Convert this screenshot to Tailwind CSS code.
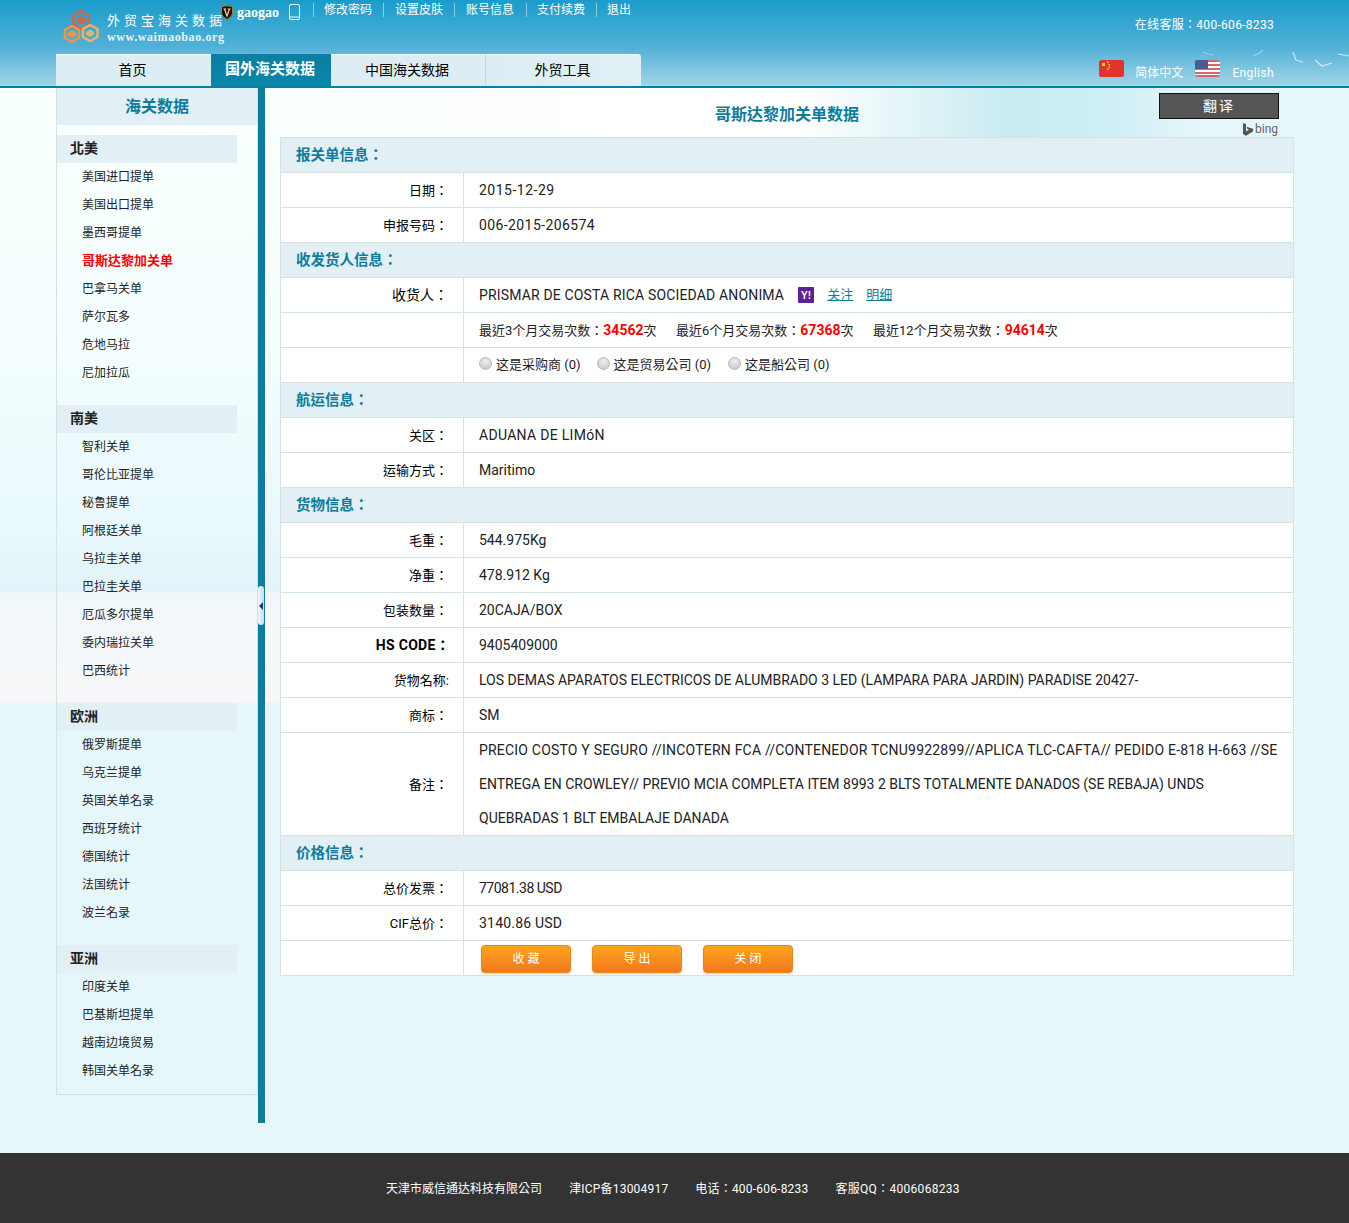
<!DOCTYPE html>
<html>
<head>
    <meta charset="UTF-8">
    <title>哥斯达黎加关单数据</title>
    <meta name="viewport" content="width=device-width, initial-scale=1.0">
    <script src="https://cdn.jsdelivr.net/npm/@tailwindcss/browser@4"></script>
</head>
<body class="bg-[#e6f7fc] font-['Roboto','Noto_Sans_CJK_TC',sans-serif] text-[14px] text-[#222]">

    <!-- header -->
    <header class="h-[88px] border-b-2 border-[#0b7f9f] bg-[linear-gradient(180deg,#1a9ccb_0%,#52b1d6_55%,#a3d5e8_100%)] relative">
        <svg class="absolute right-0 top-[48px]" width="149" height="22" viewBox="0 0 149 22" fill="none" stroke="#cfeaf4" stroke-width="1.200">
            <path d="M3 4l5 2 5 1" opacity=".5"/><path d="M53 8l5-2 5-4" opacity=".6"/><path d="M93 4l3 8 7 2"/><path d="M115 12l7 6 10-3"/><path d="M138 6l11 2"/>
        </svg>

        <!-- top row -->
        <div class="h-[54px] flex items-start pl-[56px] pr-[75px] text-white">
            <svg class="mt-[9px] ml-[7px]" width="37" height="36" viewBox="0 0 37 36" fill="none">
                <path d="M18 2l7.500 4.500v9L18 20l-7.500-4.500v-9z" stroke="#e2603a" stroke-width="2.500"/>
                <path d="M18 7l4 2.500v3.500L18 15.500 14 13V9.500z" fill="#e2603a"/>
                <path d="M9 17l7 4v8l-7 4-7-4v-8z" stroke="#e8964a" stroke-width="2.500"/>
                <path d="M9 21l4 2.500v3L9 29l-4-2.500v-3z" fill="#e8964a"/>
                <path d="M27 16l7.500 4v8L27 32l-7-4v-8z" stroke="#eab074" stroke-width="2.500"/>
                <path d="M27 20.500l4 2.500v2.500L27 28l-4-2.500V23z" fill="#eab074"/>
            </svg>
            <div class="ml-[7px] mt-[12px] w-[117px] shrink-0">
                <div class="text-[13px] leading-[18px] tracking-[4px] whitespace-nowrap">外贸宝海关数据</div>
                <div class="font-['Liberation_Serif',serif] font-bold text-[12px] leading-[15px] tracking-[0.6px] whitespace-nowrap text-[#e8f4fa]">www.waimaobao.org</div>
            </div>
            <svg class="mt-[5px] -ml-[4px] relative" width="14" height="16" viewBox="0 0 14 16">
                <path d="M1.500 1.500q5.500-1.500 11 0v7q0 3-5.500 6-5.500-3-5.500-6z" fill="#1c1208" stroke="#a87c34" stroke-width="1"/>
                <path d="M3.500 4h2.800M7.800 4h2.700M4.500 4L7 11l2.500-7" fill="none" stroke="#f0d8a0" stroke-width="1.200"/>
            </svg>
            <span class="ml-[3px] mt-[4px] font-['Liberation_Serif',serif] font-bold text-[14px] leading-[18px]">gaogao</span>
            <svg class="ml-[10px] mt-[4px]" width="11" height="16" viewBox="0 0 11 16" fill="none">
                <rect x="0.500" y="0.500" width="10" height="15" rx="1.500" stroke="#eef8fc"/>
                <path d="M1 13h9" stroke="#eef8fc"/>
            </svg>
            <nav class="flex text-[12px] mt-[3px] ml-[13px]">
                <a href="#" class="border-l border-[#8ecbe3] pl-[10px] pr-[11px] h-[14px] leading-[14px]">修改密码</a>
                <a href="#" class="border-l border-[#8ecbe3] pl-[11px] pr-[11px] h-[14px] leading-[14px]">设置皮肤</a>
                <a href="#" class="border-l border-[#8ecbe3] pl-[11px] pr-[12px] h-[14px] leading-[14px]">账号信息</a>
                <a href="#" class="border-l border-[#8ecbe3] pl-[10px] pr-[11px] h-[14px] leading-[14px]">支付续费</a>
                <a href="#" class="border-l border-[#8ecbe3] pl-[10px] h-[14px] leading-[14px]">退出</a>
            </nav>
            <div class="ml-auto mt-[16px] text-[12px] leading-[18px] tracking-[0.3px]">在线客服：400-606-8233</div>
        </div>

        <!-- tabs -->
        <div class="h-[32px] flex pl-[56px] pr-[75px]">
            <a href="#" class="w-[155px] pr-[2px] leading-[30px] text-center text-black bg-[#dcedf4] border-t border-[#eef7fa]">首页</a>
            <a href="#" class="w-[120px] pr-[2px] leading-[31px] text-center text-white font-bold text-[15px] bg-[linear-gradient(180deg,#0a7fa2,#0b86a8)]">国外海关数据</a>
            <a href="#" class="w-[155px] pr-[2px] leading-[30px] text-center text-black bg-[#dcedf4] border-t border-r border-t-[#eef7fa] border-r-[#bcd9e4]">中国海关数据</a>
            <a href="#" class="w-[155px] pr-[2px] leading-[30px] text-center text-black bg-[linear-gradient(90deg,#dcedf4,#e1f0f5)] border-t border-[#eef7fa] rounded-tr-[3px]">外贸工具</a>

            <div class="ml-auto flex items-start text-white text-[12px]">
                <svg class="mt-[6px] rounded-[2px]" width="25" height="17" viewBox="0 0 25 17">
                    <rect width="25" height="17" fill="#e1352a"/>
                    <path d="M3 3h3v3H3zM8 1.500h1.500V3H8zM9.500 4H11v1.500H9.500zM9.500 6.500H11V8H9.500zM8 8.500h1.500V10H8z" fill="#f7d234"/>
                </svg>
                <span class="ml-[11px] mt-[10px] leading-[18px]">简体中文</span>
                <svg class="ml-[12px] mt-[6px] rounded-[2px]" width="25" height="17" viewBox="0 0 25 17">
                    <rect width="25" height="17" fill="#fff"/>
                    <path d="M0 1h25M0 5h25M0 9h25M0 13h25M0 16h25" stroke="#c9343f" stroke-width="1.500"/>
                    <rect width="13" height="9" fill="#4a5b8c"/>
                </svg>
                <span class="ml-[12px] mt-[10px] tracking-[0.4px] leading-[18px]">English</span>
            </div>
        </div>
    </header>

    <!-- page body -->
    <div class="flex items-start pl-[56px] pb-[30px] bg-no-repeat bg-[linear-gradient(90deg,#f8ffff_0,#ffffff_700px,#ffffff_800px,#c8ebf1_1010px,#cdeef4_1110px,#e6f7fc_1200px),linear-gradient(180deg,#f8ffff_0,#f6ffff_230px,#e8f8fc_440px,#e2f4f9_503px,#f0f7fa_505px,#f7f8fa_600px,#f8f6f8_614px,#e6f7fc_615px)] bg-[size:100%_49px,1000px_615px]">

        <!-- sidebar -->
        <aside class="w-[202px] h-[1007px] shrink-0 border-x border-b border-[#d3e5db]">
            <h2 class="h-[37px] leading-[38px] bg-[#e2eff4] text-center text-[16px] font-bold text-[#0f7c9c]">海关数据</h2>

            <div class="mt-[10px]">
                <h3 class="w-[180px] h-[28px] leading-[27px] pl-[13px] bg-[#e2eff4] font-bold">北美</h3>
                <ul class="pl-[25px] text-[12px] leading-[28px]">
                    <li><a href="#">美国进口提单</a></li>
                    <li><a href="#">美国出口提单</a></li>
                    <li><a href="#">墨西哥提单</a></li>
                    <li><a href="#" class="text-[13px] text-[#ff0000] font-bold">哥斯达黎加关单</a></li>
                    <li><a href="#">巴拿马关单</a></li>
                    <li><a href="#">萨尔瓦多</a></li>
                    <li><a href="#">危地马拉</a></li>
                    <li><a href="#">尼加拉瓜</a></li>
                </ul>
            </div>

            <div class="mt-[18px]">
                <h3 class="w-[180px] h-[28px] leading-[27px] pl-[13px] bg-[#e2eff4] font-bold">南美</h3>
                <ul class="pl-[25px] text-[12px] leading-[28px]">
                    <li><a href="#">智利关单</a></li>
                    <li><a href="#">哥伦比亚提单</a></li>
                    <li><a href="#">秘鲁提单</a></li>
                    <li><a href="#">阿根廷关单</a></li>
                    <li><a href="#">乌拉圭关单</a></li>
                    <li><a href="#">巴拉圭关单</a></li>
                    <li><a href="#">厄瓜多尔提单</a></li>
                    <li><a href="#">委内瑞拉关单</a></li>
                    <li><a href="#">巴西统计</a></li>
                </ul>
            </div>

            <div class="mt-[18px]">
                <h3 class="w-[180px] h-[28px] leading-[27px] pl-[13px] bg-[#e2eff4] font-bold">欧洲</h3>
                <ul class="pl-[25px] text-[12px] leading-[28px]">
                    <li><a href="#">俄罗斯提单</a></li>
                    <li><a href="#">乌克兰提单</a></li>
                    <li><a href="#">英国关单名录</a></li>
                    <li><a href="#">西班牙统计</a></li>
                    <li><a href="#">德国统计</a></li>
                    <li><a href="#">法国统计</a></li>
                    <li><a href="#">波兰名录</a></li>
                </ul>
            </div>

            <div class="mt-[18px]">
                <h3 class="w-[180px] h-[28px] leading-[27px] pl-[13px] bg-[#e2eff4] font-bold">亚洲</h3>
                <ul class="pl-[25px] text-[12px] leading-[28px]">
                    <li><a href="#">印度关单</a></li>
                    <li><a href="#">巴基斯坦提单</a></li>
                    <li><a href="#">越南边境贸易</a></li>
                    <li><a href="#">韩国关单名录</a></li>
                </ul>
            </div>
        </aside>

        <!-- collapse bar -->
        <div class="w-[7px] h-[1035px] shrink-0 bg-[#0f7c9c] relative">
            <button class="absolute left-0 top-[498px] w-[6px] h-[39px] rounded-[3px] bg-[linear-gradient(90deg,#f2f8fd,#c6dcf0)] flex items-center">
                <span class="border-y-[4px] border-r-[4px] border-y-transparent border-r-[#16406e] ml-[1px]"></span>
            </button>
        </div>

        <!-- main -->
        <main class="w-[1014px] ml-[15px]">
            <div class="h-[49px] relative">
                <h1 class="text-center text-[16px] font-bold text-[#0f7c9c] leading-[54px]">哥斯达黎加关单数据</h1>
                <div class="absolute right-[15px] top-[5px] w-[120px]">
                    <button class="w-full h-[26px] bg-[#555] border border-[#111] text-white text-[14px] tracking-[2px] leading-[24px]">翻译</button>
                    <div class="flex justify-end items-center h-[20px] text-[12px] text-[#666] pr-[1px]">
                        <svg width="10" height="13" viewBox="0 0 10 13"><path d="M0 0l3 1v7.500l3-1.700-1.600-.8-.9-2.200L10 5.800v2.700L3 12.800 0 11z" fill="#555"/></svg>
                        <span class="ml-[2px] leading-[14px]">bing</span>
                    </div>
                </div>
            </div>

            <table class="w-[1014px] table-fixed border-collapse bg-white [&_td]:border [&_td]:border-[#d3e5db] [&_tr]:h-[35px]">
                <colgroup><col class="w-[183px]"><col></colgroup>
                <tr><td colspan="2" class="bg-[#e2eff4] pl-[15px] pt-[2px] text-[14.5px] font-bold text-[#0f7c9c]">报关单信息：</td></tr>
                <tr><td class="text-right pr-[15px] pt-[1px] text-[13px] text-black">日期：</td><td class="pl-[15px] tracking-[0.5px]">2015-12-29</td></tr>
                <tr><td class="text-right pr-[15px] pt-[1px] text-[13px] text-black">申报号码：</td><td class="pl-[15px] tracking-[0.4px]">006-2015-206574</td></tr>

                <tr><td colspan="2" class="bg-[#e2eff4] pl-[15px] pt-[2px] text-[14.5px] font-bold text-[#0f7c9c]">收发货人信息：</td></tr>
                <tr>
                    <td class="text-right pr-[15px] text-black">收货人：</td>
                    <td class="pl-[15px]">
                        <div class="flex items-center">
                            <span class="tracking-[0.16px]">PRISMAR DE COSTA RICA SOCIEDAD ANONIMA</span>
                            <svg class="ml-[14px]" width="16" height="16" viewBox="0 0 16 16">
                                <rect width="16" height="16" rx="1" fill="#5f1f96"/>
                                <text x="8" y="11.500" text-anchor="middle" font-size="10" font-weight="700" fill="#fff" font-family="Liberation Sans">Y!</text>
                            </svg>
                            <a href="#" class="ml-[13px] underline text-[13px] text-[#0f7c9c]">关注</a>
                            <a href="#" class="ml-[13px] underline text-[13px] text-[#0f7c9c]">明细</a>
                        </div>
                    </td>
                </tr>
                <tr>
                    <td></td>
                    <td class="pl-[15px] text-[13px]">
                        <div class="flex gap-[19.500px]">
                            <span>最近3个月交易次数：<b class="text-[14px] text-[#ff0000]">34562</b>次</span>
                            <span>最近6个月交易次数：<b class="text-[14px] text-[#ff0000]">67368</b>次</span>
                            <span>最近12个月交易次数：<b class="text-[14px] text-[#ff0000]">94614</b>次</span>
                        </div>
                    </td>
                </tr>
                <tr>
                    <td></td>
                    <td class="pl-[15px] text-[13px]">
                        <div class="flex items-center">
                            <label class="flex items-center"><input type="radio" name="kind" class="appearance-none w-[13px] h-[13px] -mt-[3px] rounded-full border border-[#bbb] bg-[radial-gradient(circle_at_50%_30%,#eee,#c4c4c4)]"><span class="ml-[4px]">这是采购商 (0)</span></label>
                            <label class="flex items-center ml-[16px]"><input type="radio" name="kind" class="appearance-none w-[13px] h-[13px] -mt-[3px] rounded-full border border-[#bbb] bg-[radial-gradient(circle_at_50%_30%,#eee,#c4c4c4)]"><span class="ml-[4px]">这是贸易公司 (0)</span></label>
                            <label class="flex items-center ml-[17px]"><input type="radio" name="kind" class="appearance-none w-[13px] h-[13px] -mt-[3px] rounded-full border border-[#bbb] bg-[radial-gradient(circle_at_50%_30%,#eee,#c4c4c4)]"><span class="ml-[4px]">这是船公司 (0)</span></label>
                        </div>
                    </td>
                </tr>

                <tr><td colspan="2" class="bg-[#e2eff4] pl-[15px] pt-[2px] text-[14.5px] font-bold text-[#0f7c9c]">航运信息：</td></tr>
                <tr><td class="text-right pr-[15px] pt-[1px] text-[13px] text-black">关区：</td><td class="pl-[15px] tracking-[0.3px]">ADUANA DE LIMóN</td></tr>
                <tr><td class="text-right pr-[15px] pt-[1px] text-[13px] text-black">运输方式：</td><td class="pl-[15px]">Maritimo</td></tr>

                <tr><td colspan="2" class="bg-[#e2eff4] pl-[15px] pt-[2px] text-[14.5px] font-bold text-[#0f7c9c]">货物信息：</td></tr>
                <tr><td class="text-right pr-[15px] pt-[1px] text-[13px] text-black">毛重：</td><td class="pl-[15px]">544.975Kg</td></tr>
                <tr><td class="text-right pr-[15px] pt-[1px] text-[13px] text-black">净重：</td><td class="pl-[15px]">478.912 Kg</td></tr>
                <tr><td class="text-right pr-[15px] pt-[1px] text-[13px] text-black">包装数量：</td><td class="pl-[15px]">20CAJA/BOX</td></tr>
                <tr><td class="text-right pr-[13px] text-black font-bold tracking-[0.3px]">HS CODE：</td><td class="pl-[15px]">9405409000</td></tr>
                <tr><td class="text-right pr-[14px] pt-[1px] text-[13px] text-black">货物名称:</td><td class="pl-[15px]">LOS DEMAS APARATOS ELECTRICOS DE ALUMBRADO 3 LED (LAMPARA PARA JARDIN) PARADISE 20427-</td></tr>
                <tr><td class="text-right pr-[15px] pt-[1px] text-[13px] text-black">商标：</td><td class="pl-[15px]">SM</td></tr>
                <tr>
                    <td class="text-right pr-[15px] pt-[1px] text-[13px] text-black">备注：</td>
                    <td class="pl-[15px] leading-[34px] whitespace-nowrap"><span class="tracking-[0.2px]">PRECIO COSTO Y SEGURO //INCOTERN FCA //CONTENEDOR TCNU9922899//APLICA TLC-CAFTA// PEDIDO E-818 H-663 //SE</span><br>ENTREGA EN CROWLEY// PREVIO MCIA COMPLETA ITEM 8993 2 BLTS TOTALMENTE DANADOS (SE REBAJA) UNDS<br>QUEBRADAS 1 BLT EMBALAJE DANADA</td>
                </tr>

                <tr><td colspan="2" class="bg-[#e2eff4] pl-[15px] pt-[2px] text-[14.5px] font-bold text-[#0f7c9c]">价格信息：</td></tr>
                <tr><td class="text-right pr-[15px] pt-[1px] text-[13px] text-black">总价发票：</td><td class="pl-[15px] tracking-[-0.5px]">77081.38 USD</td></tr>
                <tr><td class="text-right pr-[15px] pt-[1px] text-[13px] text-black">CIF总价：</td><td class="pl-[15px] tracking-[0.2px]">3140.86 USD</td></tr>
                <tr>
                    <td></td>
                    <td class="pl-[17px]">
                        <div class="flex gap-[21px] mt-[1px]">
                            <button class="w-[90px] h-[28px] rounded-[4px] border border-[#e28a1e] bg-[linear-gradient(180deg,#fca61c,#f3771d)] shadow-[0_1px_2px_#ccc] text-white text-[12px]">收 藏</button>
                            <button class="w-[90px] h-[28px] rounded-[4px] border border-[#e28a1e] bg-[linear-gradient(180deg,#fca61c,#f3771d)] shadow-[0_1px_2px_#ccc] text-white text-[12px]">导 出</button>
                            <button class="w-[90px] h-[28px] rounded-[4px] border border-[#e28a1e] bg-[linear-gradient(180deg,#fca61c,#f3771d)] shadow-[0_1px_2px_#ccc] text-white text-[12px]">关 闭</button>
                        </div>
                    </td>
                </tr>
            </table>
        </main>
    </div>

    <!-- footer -->
    <footer class="h-[70px] bg-[#333] text-white text-[12px] flex justify-center items-center gap-[27px] pt-[2px] pr-[3px]">
        <span>天津市威信通达科技有限公司</span>
        <span class="tracking-[0.2px]">津ICP备13004917</span>
        <span class="tracking-[0.2px]">电话：400-606-8233</span>
        <span class="tracking-[0.3px]">客服QQ：4006068233</span>
    </footer>

</body>
</html>
